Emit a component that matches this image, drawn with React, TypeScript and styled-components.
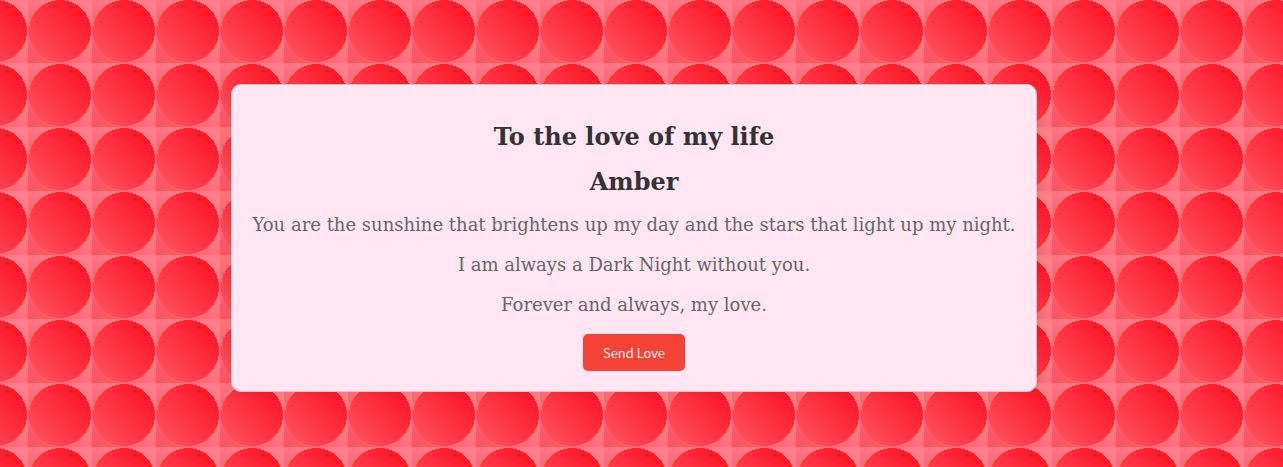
import React from "react";
import styled, { createGlobalStyle } from "styled-components";

const tile = `<svg xmlns="http://www.w3.org/2000/svg" width="64" height="64">
<defs>
<linearGradient id="base" x1="0" y1="1" x2="1" y2="0"><stop offset="0" stop-color="#ff505c"/><stop offset="0.7" stop-color="#ff7f88"/><stop offset="1" stop-color="#ff7f88"/></linearGradient>
<linearGradient id="dot" gradientUnits="userSpaceOnUse" x1="0" y1="64" x2="64" y2="0"><stop offset="0" stop-color="#ff5964"/><stop offset="1" stop-color="#ff0a1c"/></linearGradient>
</defs>
<rect width="64" height="64" fill="url(#base)"/>
<circle cx="32" cy="32" r="31" fill="url(#dot)" shape-rendering="crispEdges"/>
</svg>`;

const GlobalStyle = createGlobalStyle`
  * {
    box-sizing: border-box;
  }

  body {
    margin: 0;
    font-family: "DejaVu Serif", serif;
  }
`;

const Page = styled.main`
  min-height: 100vh;
  display: flex;
  align-items: center;
  justify-content: center;
  padding: 9px 15px 0 0;
  background: #ff6a74 url("data:image/svg+xml,${encodeURIComponent(tile)}") 28px -1px / 64px 64px;
`;

const Card = styled.section`
  padding: 21px 20px 20px;
  border: 1px solid #ccc;
  border-radius: 10px;
  background: #ffe6f2;
  box-shadow: 0 0 10px rgba(0, 0, 0, 0.1);
  text-align: center;
`;

const Title = styled.h1`
  margin: 17px 0;
  color: #333;
  font-size: 24px;
  line-height: 28px;
`;

const Message = styled.p`
  margin: 18px 0;
  color: #666;
  font-size: 18px;
  line-height: 22px;
`;

const SendButton = styled.button`
  padding: 9px 20px;
  border: none;
  border-radius: 5px;
  background: #f44336;
  color: #fff;
  font-family: "Noto Sans CJK SC", sans-serif;
  font-size: 13px;
  font-weight: 350;
  line-height: 19px;
  cursor: pointer;
`;

const messages = [
  "You are the sunshine that brightens up my day and the stars that light up my night.",
  "I am always a Dark Night without you.",
  "Forever and always, my love.",
];

export default function App() {
  return (
    <>
      <GlobalStyle />
      <Page>
        <Card>
          <Title>To the love of my life</Title>
          <Title as="h2">Amber</Title>
          {messages.map((message) => (
            <Message key={message}>{message}</Message>
          ))}
          <SendButton type="button">Send Love</SendButton>
        </Card>
      </Page>
    </>
  );
}
